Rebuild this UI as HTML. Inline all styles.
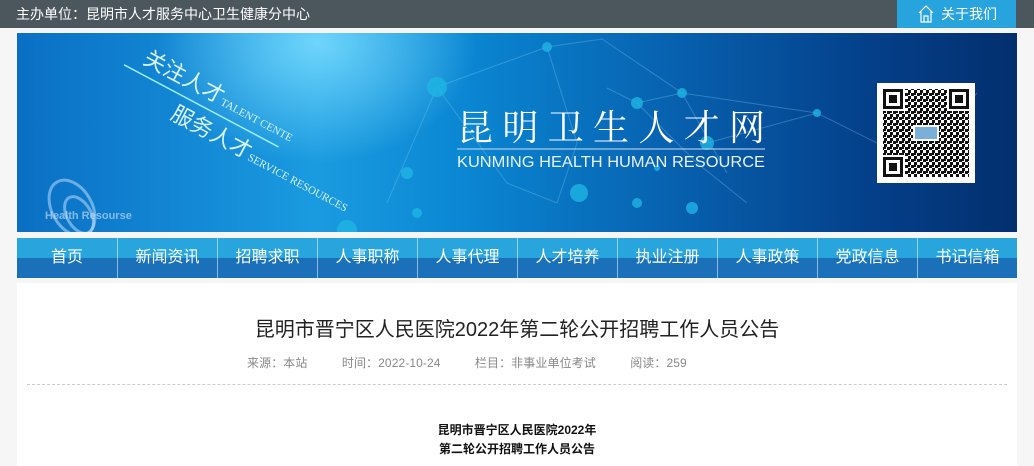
<!DOCTYPE html>
<html><head><meta charset="utf-8"><style>
*{margin:0;padding:0;box-sizing:border-box}
body{width:1034px;height:466px;overflow:hidden;background:#f6f6f6;font-family:"Liberation Sans","Noto Sans CJK SC",sans-serif}
.top{position:absolute;left:0;top:0;width:1034px;height:28px;background:#4b565d;color:#fff;font-size:14px;line-height:28px;padding-left:16px}
.btn{position:absolute;left:897px;top:0;width:119px;height:28px;background:#27a3dd;color:#fff;font-size:14px;line-height:28px;padding-left:20px}
.banner{position:absolute;left:17px;top:33px;width:1000px;height:199px;overflow:hidden;
background:radial-gradient(ellipse 160px 120px at 300px 10px,rgba(120,220,255,.9),rgba(120,220,255,0)),linear-gradient(90deg,#0a6fc4 0%,#1a9be0 30%,#0a86d2 45%,#0762b0 65%,#04408a 85%,#032f6e 100%)}
.nav{position:absolute;left:17px;top:238px;width:1000px;height:40px;background:linear-gradient(#29a5de 0,#29a5de 50%,#1a70b9 50%,#1a70b9 100%);display:flex}
.nav div{width:100px;text-align:center;color:#fff;font-size:16px;line-height:40px;border-left:1px solid rgba(255,255,255,.5)}
.nav div:first-child{border-left:none}
.main{position:absolute;left:17px;top:283px;width:1000px;height:183px;background:#fff}
.title{position:absolute;top:313px;left:0;width:1034px;text-align:center;font-size:20px;color:#222}
.meta{position:absolute;top:354px;left:247px;font-size:12px;color:#888;white-space:pre;letter-spacing:.1px}
.dash{position:absolute;left:27px;top:384px;width:980px;border-top:1px dashed #ccc}
.b{position:absolute;left:0;width:1034px;text-align:center;font-size:12px;font-weight:bold;color:#111}
</style></head><body>
<div class="top">主办单位：昆明市人才服务中心卫生健康分中心</div>
<div class="btn"><svg style="position:absolute;left:21px;top:5px" width="16" height="18" viewBox="0 0 16 18" fill="none" stroke="#fff" stroke-width="1.2"><path d="M1 8 L8 1 L15 8 M3 6 V17 H13 V6 M6 17 V11 H10 V17"/></svg><span style="margin-left:24px">关于我们</span></div>
<div class="banner">
<svg width="1000" height="199" style="position:absolute;left:0;top:0">
<defs><pattern id="q" width="6" height="6" patternUnits="userSpaceOnUse"><rect width="3" height="3" fill="#111"/><rect x="3" y="3" width="3" height="3" fill="#111"/><rect x="3" y="0" width="2" height="2" fill="#111"/></pattern></defs>
<g stroke="rgba(120,200,240,.35)" stroke-width="1" fill="none">
<path d="M420 54 L530 14 L585 6 L665 60 L710 140 M420 54 L490 150 L540 170 L560 110 M665 60 L800 80 M530 14 L560 110 M690 110 L800 80 L900 130 M620 70 L680 130 L730 170 M370 170 L420 54 M900 130 L960 60 M590 55 L620 70 L665 60"/>
</g>
<g fill="#1fb5e4" opacity=".8">
<circle cx="420" cy="54" r="10"/><circle cx="530" cy="14" r="5"/><circle cx="665" cy="60" r="5"/><circle cx="620" cy="70" r="6"/><circle cx="690" cy="110" r="7"/><circle cx="562" cy="160" r="9"/><circle cx="390" cy="140" r="6"/><circle cx="400" cy="180" r="5"/><circle cx="675" cy="175" r="6"/><circle cx="800" cy="80" r="4"/><circle cx="900" cy="130" r="5"/><circle cx="620" cy="170" r="5"/><circle cx="640" cy="135" r="3"/><circle cx="330" cy="197" r="10"/></g>
<g fill="none" stroke="rgba(200,230,255,.5)" stroke-width="3"><ellipse cx="55" cy="175" rx="20" ry="30" transform="rotate(-30 55 175)"/><ellipse cx="62" cy="182" rx="12" ry="20" transform="rotate(-30 62 182)"/></g>
<text x="28" y="186" fill="rgba(210,230,255,.6)" font-size="11" font-weight="bold" font-family="Liberation Sans">Health Resourse</text>
<g transform="rotate(28 125 30)" fill="#d8f4ff" font-family="Liberation Serif, Noto Sans CJK SC, serif"><text x="125" y="30" font-size="22">关注人才</text><text x="213" y="30" font-size="11">TALENT CENTE</text><line x1="110" y1="40" x2="285" y2="40" stroke="#9ef" stroke-width="1.5"/><text x="175" y="66" font-size="22">服务人才</text><text x="263" y="66" font-size="11">SERVICE RESOURCES</text></g>
<text x="440" y="107" fill="#fff" font-size="36" textLength="308" lengthAdjust="spacing" font-family="Noto Serif CJK SC, serif">昆明卫生人才网</text>
<line x1="440" y1="116" x2="748" y2="116" stroke="#cde" stroke-width="1"/>
<text x="440" y="134" fill="#e8f2ff" font-size="16" textLength="308" lengthAdjust="spacingAndGlyphs" font-family="Liberation Sans">KUNMING HEALTH HUMAN RESOURCE</text>
<rect x="860" y="50" width="98" height="100" fill="#fff"/>
<rect x="866" y="56" width="86" height="88" fill="url(#q)"/>
<g fill="#fff"><rect x="866" y="56" width="22" height="22"/><rect x="930" y="56" width="22" height="22"/><rect x="866" y="122" width="22" height="22"/></g>
<g fill="#111"><rect x="866" y="56" width="20" height="20"/><rect x="932" y="56" width="20" height="20"/><rect x="866" y="124" width="20" height="20"/></g>
<g fill="#fff"><rect x="869" y="59" width="14" height="14"/><rect x="935" y="59" width="14" height="14"/><rect x="869" y="127" width="14" height="14"/></g>
<g fill="#111"><rect x="872" y="62" width="8" height="8"/><rect x="938" y="62" width="8" height="8"/><rect x="872" y="130" width="8" height="8"/></g>
<rect x="896" y="92" width="26" height="16" fill="#fff"/><rect x="898" y="94" width="22" height="12" fill="#7ab0d8"/>
</svg>
</div>
<div class="nav"><div>首页</div><div>新闻资讯</div><div>招聘求职</div><div>人事职称</div><div>人事代理</div><div>人才培养</div><div>执业注册</div><div>人事政策</div><div>党政信息</div><div>书记信箱</div></div>
<div class="main"></div>
<div class="title">昆明市晋宁区人民医院2022年第二轮公开招聘工作人员公告</div>
<div class="meta">来源：本站          时间：2022-10-24          栏目：非事业单位考试          阅读：259</div>
<div class="dash"></div>
<div class="b" style="top:421px">昆明市晋宁区人民医院2022年</div>
<div class="b" style="top:440px">第二轮公开招聘工作人员公告</div>
</body></html>
